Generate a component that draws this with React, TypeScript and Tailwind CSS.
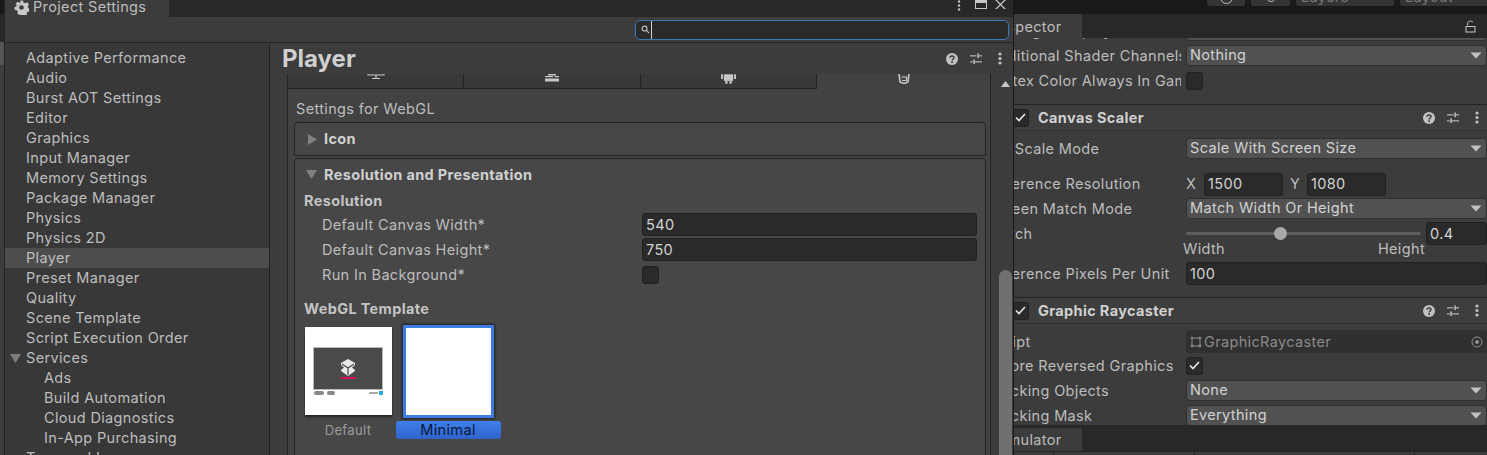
import React from "react";

function Help() {
  return (
    <svg width="12" height="12" viewBox="0 0 13 13">
      <circle cx="6.5" cy="6.5" r="6.5" fill="#c2c2c2" />
      <path d="M4.4 5.1c0-2.6 4.3-2.6 4.3-.1 0 1.6-2.1 1.5-2.1 3" fill="none" stroke="#3c3c3c" strokeWidth="1.6" />
      <rect x="5.7" y="9" width="1.8" height="1.8" fill="#3c3c3c" />
    </svg>
  );
}
function Sliders() {
  return (
    <svg width="12" height="12" viewBox="0 0 13 13" fill="#c2c2c2">
      <rect x="0" y="2.5" width="7" height="1.2" />
      <rect x="8" y="0.5" width="1.6" height="5" />
      <rect x="9.6" y="2.5" width="3.4" height="1.2" />
      <rect x="0" y="9" width="3" height="1.2" />
      <rect x="3.6" y="7" width="1.6" height="5" />
      <rect x="5.2" y="9" width="7.8" height="1.2" />
    </svg>
  );
}
function Kebab() {
  return (
    <svg width="4" height="13" viewBox="0 0 4 13" fill="#c2c2c2" className="ml-[4px]">
      <circle cx="2" cy="2" r="1.6" />
      <circle cx="2" cy="6.5" r="1.6" />
      <circle cx="2" cy="11" r="1.6" />
    </svg>
  );
}
function HeaderIcons() {
  return (
    <div className="flex items-center gap-[12px]">
      <Help />
      <Sliders />
      <Kebab />
    </div>
  );
}
function Caret() {
  return (
    <svg width="12" height="7" viewBox="0 0 12 7" className="shrink-0">
      <path d="M0.5 0.5H11.5L6 6.5Z" fill="#c2c2c2" />
    </svg>
  );
}
function Dropdown({ text }: { text: string }) {
  return (
    <div className="flex h-[21px] flex-1 items-center justify-between rounded-[4px] border border-[#303030] bg-[#515151] pl-[3px] pr-[4px] text-[#d2d2d2]">
      <span className="-mt-[2px]">{text}</span>
      <Caret />
    </div>
  );
}
function Check({ on }: { on?: boolean }) {
  return (
    <div className="flex h-[18px] w-[17px] shrink-0 items-center justify-center rounded-[3px] border border-[#212121] bg-[#2a2a2a]">
      {on && (
        <svg width="11" height="9" viewBox="0 0 11 9">
          <path d="M1 4.5L4 7.5L10 1" fill="none" stroke="#e4e4e4" strokeWidth="1.7" />
        </svg>
      )}
    </div>
  );
}
function Row({ label, children, h = "h-[25px]", pl = "pl-[3px]" }: { label: string; children: React.ReactNode; h?: string; pl?: string }) {
  return (
    <div className={`flex items-center ${h}`}>
      <div className={`mr-[5px] w-[196px] shrink-0 overflow-hidden whitespace-nowrap ${pl}`}>{label}</div>
      <div className="flex min-w-0 flex-1 items-center">{children}</div>
    </div>
  );
}
function CompHeader({ title }: { title: string }) {
  return (
    <div className="flex h-[27px] items-center border-y border-y-[#232323] border-b-[#303030] bg-[#3e3e3e] pl-[27px] pr-[8px]">
      <Check on />
      <span className="ml-[9px] flex-1 font-bold text-[#d0d0d0]">{title}</span>
      <HeaderIcons />
    </div>
  );
}
function NumInput({ v, w }: { v: string; w: string }) {
  return (
    <div className={`flex h-[23px] items-center rounded-[3px] border border-[#212121] bg-[#2a2a2a] pl-[3px] text-[#d2d2d2] ${w}`}>
      {v}
    </div>
  );
}

function Inspector() {
  return (
    <div className="ml-[985px] flex h-[455px] w-[502px] flex-col overflow-hidden bg-[#3c3c3c]">
      <div className="flex h-[14px] shrink-0 items-end bg-[#191919] pb-[8px] pl-[222px]">
        <div className="flex items-end gap-[6px] text-[#777777]">
          <div className="flex h-[18px] w-[38px] items-center justify-center rounded-[3px] bg-[#343434]">
            <div className="h-[13px] w-[13px] rounded-full border border-[#bdbdbd]" />
          </div>
          <div className="flex h-[18px] w-[39px] items-center justify-center rounded-[3px] bg-[#343434]">
            <div className="h-[10px] w-[10px] rounded-full border border-[#bdbdbd]" />
          </div>
          <div className="flex h-[18px] w-[98px] items-center rounded-[3px] bg-[#343434] pl-[5px]">Layers</div>
          <div className="flex h-[18px] w-[90px] items-center rounded-[3px] bg-[#343434] pl-[5px]">Layout</div>
        </div>
      </div>
      <div className="flex h-[24px] shrink-0 items-stretch justify-between bg-[#282828] pr-[10px]">
        <div className="flex w-[97px] items-center rounded-tr-[3px] bg-[#3c3c3c] pl-[9px] pt-[2px]">Inspector</div>
        <svg width="12" height="13" viewBox="0 0 12 13" className="self-center" fill="none" stroke="#c4c4c4">
          <path d="M2.5 5.5V3.5C2.5 1 6.5 0.5 8 2" />
          <rect x="1" y="6.5" width="9" height="5.5" />
        </svg>
      </div>
      <div className="h-[387px] shrink-0 overflow-hidden">
        <div className="-mt-[20px]">
          <Row label="Target Display" pl="pl-[24px]"><Dropdown text="Display 1" /></Row>
          <Row label="Additional Shader Channels"><Dropdown text="Nothing" /></Row>
          <Row label="Vertex Color Always In Game Color"><Check /></Row>
          <div className="mt-[11px]"><CompHeader title="Canvas Scaler" /></div>
          <div className="mt-[5px]">
            <Row label="UI Scale Mode" pl="pl-[10px]"><Dropdown text="Scale With Screen Size" /></Row>
            <div className="mt-[11px]">
              <Row label="Reference Resolution" h="h-[24px]">
                <span className="w-[18px]">X</span>
                <NumInput v="1500" w="w-[79px]" />
                <span className="ml-[7px] w-[17px]">Y</span>
                <NumInput v="1080" w="w-[79px]" />
              </Row>
            </div>
            <Row label="Screen Match Mode"><Dropdown text="Match Width Or Height" /></Row>
            <Row label="Match">
              <div className="relative mr-[5px] h-[3px] flex-1 rounded bg-[#5e5e5e]">
                <div className="absolute -top-[5px] left-[88px] h-[13px] w-[13px] rounded-full bg-[#a8a8a8]" />
              </div>
              <NumInput v="0.4" w="w-[61px]" />
            </Row>
            <div className="-mt-[6px] flex h-[18px] items-center justify-between pl-[198px] pr-[62px]">
              <span>Width</span>
              <span>Height</span>
            </div>
            <div className="mt-[3px]">
              <Row label="Reference Pixels Per Unit">
                <NumInput v="100" w="flex-1" />
              </Row>
            </div>
          </div>
          <div className="mt-[11px]"><CompHeader title="Graphic Raycaster" /></div>
          <div className="mt-[5px]">
            <Row label="Script" h="h-[25px]">
              <div className="flex h-[23px] flex-1 items-center justify-between rounded-[3px] bg-[#303030] px-[4px] text-[#8a8a8a]">
                <span className="flex items-center gap-[2px]">
                  <svg width="12" height="12" viewBox="0 0 12 12" fill="none" stroke="#8f8f8f">
                    <path d="M2 2H10V10H2Z M2 0.5V3 M0.5 2H3 M10 0.5V3 M8 2H11.5 M2 8V11.5 M0.5 10H3 M10 8V11.5 M8 10H11.5" />
                  </svg>
                  GraphicRaycaster
                </span>
                <svg width="12" height="12" viewBox="0 0 12 12" fill="none" stroke="#8f8f8f">
                  <circle cx="6" cy="6" r="5" />
                  <circle cx="6" cy="6" r="1.5" fill="#8f8f8f" />
                </svg>
              </div>
            </Row>
            <div className="-mt-[1px]">
              <Row label="Ignore Reversed Graphics"><Check on /></Row>
            </div>
            <Row label="Blocking Objects"><Dropdown text="None" /></Row>
            <Row label="Blocking Mask"><Dropdown text="Everything" /></Row>
          </div>
        </div>
      </div>
      <div className="flex h-[26px] shrink-0 items-end bg-[#282828]">
        <div className="flex h-[23px] w-[97px] items-center rounded-tr-[3px] bg-[#3c3c3c] pl-[9px]">Simulator</div>
      </div>
      <div className="flex flex-1 border-t border-[#232323] pl-[68px] text-[0px]">
        <div className="w-[141px] border-l border-[#232323]" />
        <div className="w-[220px] border-l border-[#232323]" />
        <div className="flex-1 border-l border-[#232323]" />
      </div>
    </div>
  );
}

const menu: { t: string; indent?: boolean; sel?: boolean; open?: boolean }[] = [
  { t: "Adaptive Performance" }, { t: "Audio" }, { t: "Burst AOT Settings" }, { t: "Editor" }, { t: "Graphics" },
  { t: "Input Manager" }, { t: "Memory Settings" }, { t: "Package Manager" }, { t: "Physics" }, { t: "Physics 2D" },
  { t: "Player", sel: true }, { t: "Preset Manager" }, { t: "Quality" }, { t: "Scene Template" }, { t: "Script Execution Order" },
  { t: "Services", open: true }, { t: "Ads", indent: true }, { t: "Build Automation", indent: true },
  { t: "Cloud Diagnostics", indent: true }, { t: "In-App Purchasing", indent: true }, { t: "Tags and Layers" },
];

function PlatformTab({ active, children, last, w }: { active?: boolean; children: React.ReactNode; last?: boolean; w: string }) {
  return (
    <div className={`flex h-[15px] items-start justify-center overflow-hidden ${w} ${active ? "bg-[#424242]" : "border-b border-b-[#232323] bg-[#383838]"} ${last ? "" : "border-r border-r-[#232323]"}`}>
      {children}
    </div>
  );
}

function ProjectWindow() {
  return (
    <div className="absolute left-[4px] top-0 flex h-[455px] w-[1010px] flex-col overflow-hidden border-x border-x-[#232323] border-r-[#191919] bg-[#3c3c3c]">
      <div className="flex h-[17px] shrink-0 items-start bg-[#282828]">
        <div className="flex h-[17px] w-[164px] items-center gap-[4px] bg-[#3c3c3c] pl-[9px]">
          <svg width="15" height="15" viewBox="0 0 15 15" className="-mt-[2px]">
            <path d="M6 0.5h3l.5 2 1.7.8 1.9-1 1.9 2.2-1.2 1.7.4 1.8 2 .8-.6 2.8-2 .1-1 1.5.6 2-2.7 1.3-1.3-1.6h-1.9L6 15l-2.7-1.3.6-2-1-1.5-2-.1-.6-2.8 2-.8.4-1.8L1.5 4l1.9-2.2 1.9 1 1.7-.8Z" fill="#c8c8c8" />
            <circle cx="7.5" cy="7.5" r="2.3" fill="#3c3c3c" />
          </svg>
          <span className="-mt-[4px]">Project Settings</span>
        </div>
        <div className="ml-auto flex h-[10px] items-start pr-[7px]">
          <svg width="4" height="11" viewBox="0 0 4 11" fill="#c2c2c2">
            <circle cx="2" cy="1.5" r="1.2" /><circle cx="2" cy="5.5" r="1.2" /><circle cx="2" cy="9.5" r="1.2" />
          </svg>
          <div className="ml-[14px] h-[9px] w-[12px] border border-t-[3px] border-[#c8c8c8]" />
          <svg width="11" height="9" viewBox="0 1 11 9" stroke="#d0d0d0" strokeWidth="1.2" className="ml-[8px]"><path d="M0.5 0.5L10.5 10.5M10.5 0.5L0.5 10.5" /></svg>
        </div>
      </div>
      <div className="flex h-[26px] shrink-0 items-center justify-end border-b border-[#232323] pr-[4px]">
        <div className="flex h-[20px] w-[374px] items-center rounded-[5px] border border-[#3a78b8] bg-[#2a2a2a] pl-[5px]">
          <svg width="9" height="9" viewBox="0 0 11 11" fill="none" stroke="#c4c4c4" strokeWidth="1.4">
            <circle cx="4.3" cy="4.3" r="3" /><path d="M6.5 6.5L10 10" />
          </svg>
          <div className="ml-[1px] h-[18px] w-px bg-[#d0d0d0]" />
        </div>
      </div>
      <div className="flex min-h-0 flex-1">
        <div className="w-[265px] shrink-0 border-r border-[#232323] bg-[#383838] pt-[5px]">
          {menu.map((m) => (
            <div key={m.t} className={`relative flex h-[20px] items-center ${m.indent ? "pl-[39px]" : "pl-[21px]"} ${m.sel ? "bg-[#4d4d4d]" : ""}`}>
              {m.open && (
                <svg width="11" height="9" viewBox="0 0 11 9" className="absolute left-[5px] top-[6px]"><path d="M0 0H11L5.5 9Z" fill="#7d7d7d" /></svg>
              )}
              {m.t}
            </div>
          ))}
        </div>
        <div className="flex min-w-0 flex-1 flex-col">
          <div className="flex h-[31px] shrink-0 items-center justify-between pl-[12px] pr-[11px]">
            <span className="text-[24px] font-bold leading-none tracking-normal text-[#cfcfcf]">Player</span>
            <HeaderIcons />
          </div>
          <div className="flex min-h-0 flex-1">
            <div className="ml-[17px] flex w-[704px] shrink-0 flex-col border-x border-[#232323] bg-[#424242]">
              <div className="flex h-[15px] shrink-0">
                <PlatformTab w="w-[176px]">
                  <svg width="18" height="7" viewBox="0 0 18 7" className="-translate-y-[1px]" fill="none" stroke="#c8c8c8" strokeWidth="1.2"><path d="M1 0V2H17V0M9 2V5.5M5 5.5H13" /></svg>
                </PlatformTab>
                <PlatformTab w="w-[177px]">
                  <svg width="14" height="8" viewBox="0 0 14 8" fill="#c8c8c8"><path d="M3 0H11V1.5H3Z" /><path d="M0 2H8V3.2H0Z" /><path d="M9.5 2H14V3.2H9.5Z" /><path d="M0 4.5H14V7.5H0Z" /></svg>
                </PlatformTab>
                <PlatformTab w="w-[176px]">
                  <svg width="15" height="10" viewBox="0 0 16 10" fill="#c8c8c8"><rect x="0" y="0" width="2" height="5" /><rect x="14" y="0" width="2" height="5" /><rect x="3" y="0" width="10" height="7" /><rect x="4.5" y="7" width="2.5" height="3" /><rect x="9" y="7" width="2.5" height="3" /></svg>
                </PlatformTab>
                <PlatformTab active last w="flex-1">
                  <svg width="12" height="10" viewBox="0 0 12 10" fill="none" stroke="#c8c8c8" strokeWidth="1.6"><path d="M1 0L2 8L6 9.5L10 8L11 0" /><path d="M3.5 3H8.5V6.5H4" strokeWidth="1.2" /></svg>
                </PlatformTab>
              </div>
              <div className="flex-1 pl-[6px] pr-[4px]">
                <div className="mt-[10px] flex h-[20px] items-center pl-[2px]">Settings for WebGL</div>
                <div className="mt-[3px] flex h-[34px] items-center rounded-t-[4px] border border-[#232323] bg-[#474747] pl-[13px]">
                  <svg width="9" height="11" viewBox="0 0 9 11" className="mr-[7px]"><path d="M0 0L9 5.5L0 11Z" fill="#808080" /></svg>
                  <span className="font-bold text-[#d0d0d0]">Icon</span>
                </div>
                <div className="mt-[2px] h-[300px] rounded-t-[4px] border border-[#232323] bg-[#474747]">
                  <div className="flex h-[31px] items-center pl-[11px]">
                    <svg width="11" height="9" viewBox="0 0 11 9" className="mr-[7px]"><path d="M0 0H11L5.5 9Z" fill="#808080" /></svg>
                    <span className="font-bold text-[#d0d0d0]">Resolution and Presentation</span>
                  </div>
                  <div className="flex h-[22px] items-center pl-[9px] font-bold text-[#c4c4c4]">Resolution</div>
                  <div className="pl-[27px] pr-[8px]">
                    {[["Default Canvas Width*", "540"], ["Default Canvas Height*", "750"]].map(([l, v]) => (
                      <div key={l} className="flex h-[25px] items-center">
                        <span className="w-[320px] shrink-0">{l}</span>
                        <div className="flex h-[23px] flex-1 items-center rounded-[3px] border border-[#212121] bg-[#2a2a2a] pl-[3px] text-[#d2d2d2]">{v}</div>
                      </div>
                    ))}
                    <div className="flex h-[25px] items-center">
                      <span className="w-[320px] shrink-0">Run In Background*</span>
                      <Check />
                    </div>
                  </div>
                  <div className="mt-[11px] flex h-[22px] items-center pl-[9px] font-bold text-[#c4c4c4]">WebGL Template</div>
                  <div className="flex pl-[9px] pt-[5px]">
                    <div className="flex w-[88px] flex-col items-center">
                      <div className="mt-[2px] flex h-[88px] w-[87px] flex-col items-center bg-white pt-[20px] shadow-[0_2px_2px_rgba(0,0,0,0.5)]">
                        <div className="flex h-[43px] w-[70px] flex-col items-center justify-center border border-[#bcbcbc] bg-[#4a4a4a]">
                          <svg width="16" height="17" viewBox="0 0 16 17" fill="#e8e8e8">
                            <path d="M8 0L15 4V12L8 17L1 12V4Z" />
                            <path d="M8 9V16M8 9L2 5M8 9L14 5" stroke="#4a4a4a" strokeWidth="1.2" fill="none" />
                            <path d="M1 6L4 8.5L1 11Z M15 6L12 8.5L15 11Z" fill="#4a4a4a" />
                          </svg>
                          <div className="mt-[1px] h-[2px] w-[15px] bg-[#d8115f]" />
                        </div>
                        <div className="mt-[1px] flex w-[69px] items-center justify-between">
                          <div className="flex gap-[3px]"><div className="h-[4px] w-[10px] rounded-full bg-[#888888]" /><div className="h-[4px] w-[8px] rounded-full bg-[#888888]" /></div>
                          <div className="flex items-center gap-[1px]"><div className="h-[2px] w-[9px] bg-[#aaaaaa]" /><div className="h-[4px] w-[4px] bg-[#2aa7d8]" /></div>
                        </div>
                      </div>
                      <div className="mt-[6px] text-[13px] text-[#9c9c9c]">Default</div>
                    </div>
                    <div className="ml-[3px] flex w-[106px] flex-col items-center">
                      <div className="h-[93px] w-[91px] border-[3px] border-[#3f7de0] bg-white shadow-[0_0_2px_1px_rgba(0,0,0,0.6)]" />
                      <div className="mt-[3px] flex h-[18px] w-[105px] items-center justify-center rounded-[3px] bg-linear-to-b from-[#3f80ee] to-[#2f62c8] text-[#0b1a3c]">Minimal</div>
                    </div>
                  </div>
                </div>
              </div>
            </div>
            <div className="flex w-[21px] flex-col">
              <div className="ml-[8px] flex h-[196px] justify-center bg-[#3c3c3c] pt-[7px]">
                <svg width="9" height="6" viewBox="0 0 9 6"><path d="M4.5 0L9 6H0Z" fill="#c8c8c8" /></svg>
              </div>
              <div className="ml-[8px] flex-1 rounded-t-[7px] bg-[#707070]" />
            </div>
          </div>
        </div>
      </div>
    </div>
  );
}

export default function App() {
  return (
    <div className="relative h-[455px] w-[1487px] overflow-hidden bg-[#1f1f1f] font-['Inter',sans-serif] text-[14.5px] tracking-[0.35px] text-[#bdbdbd]">
      <div className="absolute left-0 top-0 flex h-[455px] w-[4px] flex-col">
        <div className="h-[14px] bg-[#191919]" />
        <div className="h-[28px] bg-[#282828]" />
        <div className="h-[23px] bg-[#555555]" />
        <div className="flex-1 bg-[#3c3c3c]" />
      </div>
      <Inspector />
      <ProjectWindow />
    </div>
  );
}
